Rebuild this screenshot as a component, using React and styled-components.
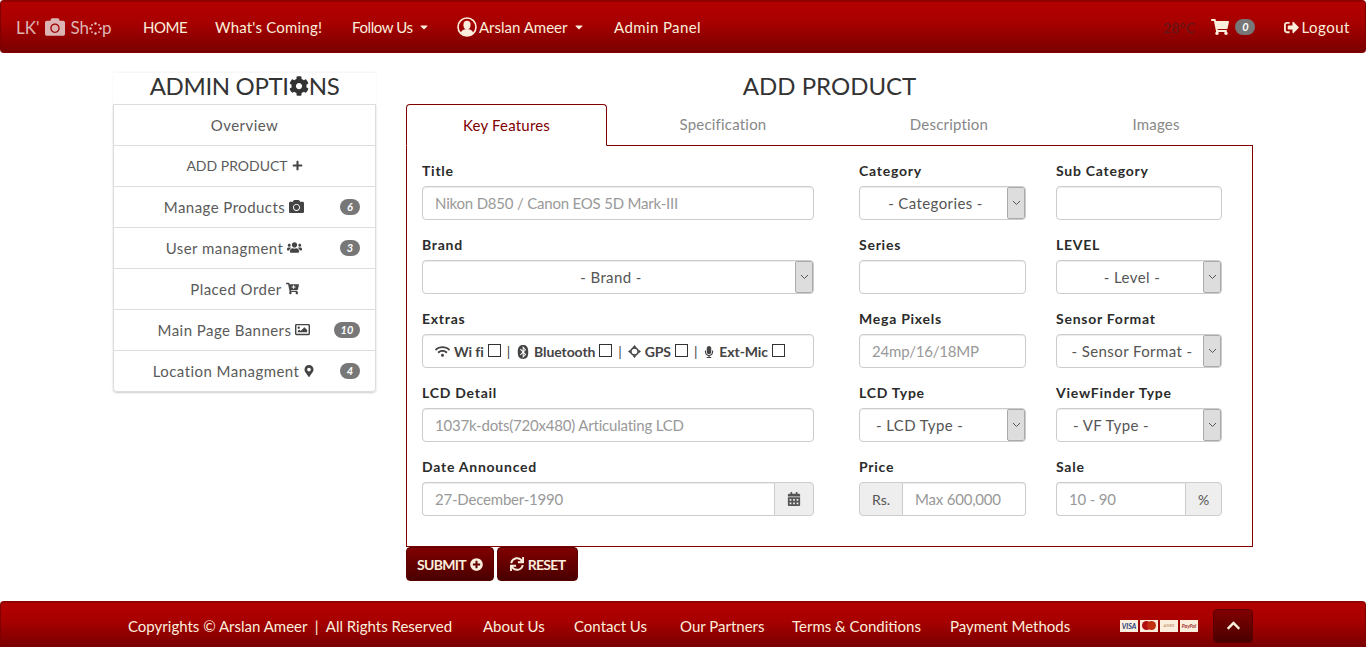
import React from 'react';
import styled, { createGlobalStyle } from 'styled-components';
import {
  FaCamera, FaPlus, FaUsers, FaCartPlus, FaRegImage, FaMapMarkerAlt, FaCog, FaShoppingCart,
  FaSignOutAlt, FaWifi, FaBluetooth, FaMicrophone, FaCalendarAlt,
  FaPlusCircle, FaSync, FaChevronUp, FaCaretDown,
} from 'react-icons/fa';

const GlobalStyle = createGlobalStyle`
  * { box-sizing: border-box; }
  html, body { margin: 0; padding: 0; background: #fff; }
  body {
    font-family: 'Lato', 'Open Sans', sans-serif;
    font-size: 14px;
    color: #333;
    overflow: hidden;
  }
`;

const Page = styled.div`
  width: 1366px;
  height: 647px;
  display: flex;
  flex-direction: column;
`;

const barBackground = `
  background: linear-gradient(180deg, #b30000 0%, #a80000 40%, #7a0000 100%);
  border: 1px solid #800000;
  border-top: 2px solid #900000;
`;

const Navbar = styled.nav`
  ${barBackground}
  height: 53px;
  border-radius: 4px;
  display: flex;
  align-items: center;
  color: #fbeedc;
  font-size: 15px;
  letter-spacing: 0.2px;
  padding-left: 15px;
`;

const Brand = styled.div`
  width: 127px;
  display: flex;
  align-items: center;
  font-size: 17px;
  color: #dcb4b4;
  letter-spacing: 0;
  svg { flex-shrink: 0; }
`;

const BrandCamera = styled.span`
  display: flex;
  margin: 0 5px 0 6px;
`;

const NavLink = styled.a`
  width: ${p => p.$width}px;
  flex-shrink: 0;
  display: flex;
  align-items: center;
  gap: 5px;
  white-space: nowrap;
  letter-spacing: ${p => p.$spacing ?? 0.2}px;
`;

const Avatar = styled.svg`
  margin-right: -3px;
`;

const Spacer = styled.div`
  flex: 1;
`;

const Weather = styled.span`
  color: #5a1a1a;
  font-size: 14px;
  margin-right: 16px;
`;

const CartLink = styled.a`
  display: flex;
  align-items: center;
  gap: 6px;
  margin-right: 29px;
`;

const Badge = styled.span`
  display: inline-block;
  min-width: ${p => (p.$wide ? 26 : 20)}px;
  height: 16px;
  line-height: 16px;
  border-radius: 10px;
  background: #777;
  color: #fff;
  font-size: 11px;
  font-weight: 700;
  font-style: italic;
  text-align: center;
  letter-spacing: 0;
`;

const Logout = styled.a`
  display: flex;
  align-items: center;
  gap: 2px;
  margin-right: 15px;
  letter-spacing: 0.5px;
`;

const Content = styled.main`
  flex: 1;
  display: flex;
  padding: 20px 113px 0;
  gap: 30px;
`;

const Sidebar = styled.aside`
  width: 263px;
  flex-shrink: 0;
`;

const SideTitle = styled.h3`
  margin: 0;
  height: 31px;
  font-size: 24px;
  font-weight: 400;
  line-height: 26px;
  color: #333;
  letter-spacing: -0.35px;
  display: flex;
  justify-content: center;
  align-items: flex-start;
  box-shadow: 0 -1px 2px rgba(0, 0, 0, 0.05);
  svg { margin-top: 3px; }
`;

const SideList = styled.ul`
  list-style: none;
  margin: 0;
  padding: 0;
  border-radius: 0 0 4px 4px;
  box-shadow: 0 1px 2px rgba(0, 0, 0, 0.2);
`;

const SideItem = styled.li`
  height: 42px;
  margin-top: -1px;
  border: 1px solid #ddd;
  display: flex;
  align-items: center;
  justify-content: center;
  gap: 4px;
  position: relative;
  color: #5a5a5a;
  font-size: ${p => (p.$caps ? 14 : 15)}px;
  letter-spacing: ${p => (p.$caps ? 0 : 0.45)}px;
  padding: 0 ${p => (p.$badge ? 21 : 0)}px 1px 0;
  &:first-child { margin-top: 0; }
  &:last-child { border-radius: 0 0 4px 4px; }
  svg { color: #444; font-size: 15px; }
`;

const SideBadge = styled.span`
  position: absolute;
  right: 15px;
  top: 12px;
  display: flex;
`;

const MainColumn = styled.section`
  width: 847px;
`;

const MainTitle = styled.h3`
  margin: 0 0 1px;
  height: 30px;
  font-size: 24px;
  font-weight: 400;
  line-height: 26px;
  text-align: center;
  color: #333;
`;

const Tabs = styled.div`
  display: grid;
  grid-template-columns: 201px 232px 220px 194px;
  height: 42px;
  position: relative;
  z-index: 1;
`;

const Tab = styled.a`
  display: flex;
  align-items: center;
  justify-content: center;
  padding-bottom: 1px;
  font-size: 15px;
  letter-spacing: 0.2px;
  color: ${p => (p.$active ? '#800000' : '#888')};
  border-bottom: 1px solid #800000;
  ${p => p.$active && `
    border: 1px solid #800000;
    border-bottom: 1px solid #fff;
    border-radius: 4px 4px 0 0;
  `}
`;

const Panel = styled.div`
  margin-top: -1px;
  height: 402px;
  border: 1px solid #800000;
  padding: 16px 15px 0;
  display: grid;
  grid-template-columns: 407px 167px 166px;
  column-gap: 30px;
  grid-auto-rows: 74px;
`;

const FieldGroup = styled.div`
  display: flex;
  flex-direction: column;
  padding-right: ${p => (p.$wide ? 15 : 0)}px;
`;

const Label = styled.label`
  font-size: 14px;
  font-weight: 700;
  color: #2b2b2b;
  height: 24px;
  line-height: 18px;
  letter-spacing: 0.75px;
`;

const fieldBox = `
  height: 34px;
  border: 1px solid #ccc;
  border-radius: 4px;
  background: #fff;
  box-shadow: inset 0 1px 1px rgba(0, 0, 0, 0.075);
`;

const TextBox = styled.div`
  ${fieldBox}
  display: flex;
  align-items: center;
  padding: 0 12px;
  font-size: 15px;
  letter-spacing: -0.2px;
  color: #999;
  flex: ${p => (p.$grow ? 1 : 'none')};
  ${p => p.$grow && `border-radius: ${p.$side === 'left' ? '4px 0 0 4px' : '0 4px 4px 0'};`}
  ${p => p.$grow && (p.$side === 'left' ? 'border-right: 0;' : 'border-left: 0;')}
`;

const SelectBox = styled.div`
  ${fieldBox}
  display: flex;
  align-items: center;
  font-size: 15px;
  letter-spacing: 0.4px;
  color: #555;
  overflow: hidden;
`;

const SelectText = styled.span`
  flex: 1;
  text-align: ${p => (p.$left ? 'left' : 'center')};
  padding-left: ${p => (p.$left ? 16 : 4)}px;
`;

const SelectArrow = styled.span`
  width: 18px;
  height: 100%;
  background: #ddd;
  border: 1px solid #aaa;
  border-radius: 2px;
  display: flex;
  align-items: center;
  justify-content: center;
  color: #555;
`;

const ExtrasBox = styled.div`
  ${fieldBox}
  display: flex;
  align-items: center;
  padding: 1px 12px 0;
  font-size: 14px;
  font-weight: 700;
  letter-spacing: -0.1px;
  color: #444;
  white-space: nowrap;
`;

const Extra = styled.span`
  display: flex;
  align-items: center;
  gap: 4px;
`;

const Check = styled.span`
  display: inline-block;
  width: 13px;
  height: 13px;
  margin-top: -3px;
  border: 1px solid #333;
  background: #fff;
`;

const Divider = styled.span`
  margin: 0 6px;
  font-weight: 400;
`;

const InputGroup = styled.div`
  display: flex;
  height: 34px;
`;

const Addon = styled.span`
  width: ${p => p.$width}px;
  flex-shrink: 0;
  height: 34px;
  background: #eee;
  border: 1px solid #ccc;
  border-radius: ${p => (p.$side === 'left' ? '4px 0 0 4px' : '0 4px 4px 0')};
  display: flex;
  align-items: center;
  justify-content: center;
  color: #555;
  font-size: 14px;
`;

const Actions = styled.div`
  display: flex;
  gap: 3px;
`;

const ActionButton = styled.button`
  height: 34px;
  width: ${p => p.$width}px;
  padding: 0;
  display: flex;
  align-items: center;
  justify-content: center;
  gap: 4px;
  font-family: inherit;
  font-size: 14px;
  font-weight: 700;
  letter-spacing: -0.7px;
  color: #fbeedc;
  background: linear-gradient(180deg, #800000 0%, #4a0000 100%);
  border: 1px solid #5a0000;
  border-radius: 4px;
`;

const Footer = styled.footer`
  ${barBackground}
  height: 46px;
  flex-shrink: 0;
  border-radius: 4px 4px 0 0;
  display: flex;
  align-items: center;
  padding: 2px 0 0 127px;
  color: #fbeedc;
  font-size: 15px;
`;

const FooterLink = styled.a`
  width: ${p => p.$width}px;
  flex-shrink: 0;
  white-space: nowrap;
`;

const PayCards = styled.div`
  display: flex;
  gap: 2px;
  margin-right: 15px;
`;

const PayCard = styled.span`
  width: 18px;
  height: 12px;
  background: #fbeedc;
  color: ${p => p.$color};
  font-size: ${p => p.$size}px;
  font-weight: 700;
  font-style: italic;
  line-height: 12px;
  text-align: center;
  overflow: hidden;
  display: flex;
  align-items: center;
  justify-content: center;
`;

const TopButton = styled.button`
  width: 40px;
  height: 34px;
  display: flex;
  align-items: center;
  justify-content: center;
  padding: 0;
  color: #fbeedc;
  background: linear-gradient(180deg, #800000 0%, #4a0000 100%);
  border: 1px solid #5a0000;
  border-radius: 4px;
  font-size: 15px;
`;

// dotted ring that stands in for the "o" of the shop logo
const SpinnerDots = () => (
  <svg width="13" height="13" viewBox="0 0 13 13" fill="#e8c8c8" style={{ marginTop: 3 }}>
    {[0, 45, 90, 135, 180, 225, 270, 315].map(angle => (
      <circle
        key={angle}
        cx={6.5 + 5 * Math.cos((angle * Math.PI) / 180)}
        cy={6.5 + 5 * Math.sin((angle * Math.PI) / 180)}
        r={angle % 90 === 0 ? 1.2 : 0.9}
      />
    ))}
  </svg>
);

const UserAvatar = () => (
  <Avatar width="20" height="20" viewBox="0 0 20 20">
    <circle cx="10" cy="10" r="9" fill="none" stroke="#fbeedc" strokeWidth="1.6" />
    <ellipse cx="10" cy="8" rx="3.6" ry="4.2" fill="#fbeedc" />
    <path d="M3.8 16c.8-3 3-4 6.2-4s5.4 1 6.2 4a8 8 0 0 1-12.4 0z" fill="#fbeedc" />
  </Avatar>
);

const ThinChevron = () => (
  <svg width="9" height="6" viewBox="0 0 9 6" fill="none" stroke="#555" strokeWidth="1">
    <path d="M1 1l3.5 3.5L8 1" />
  </svg>
);

const GpsIcon = () => (
  <svg width="13" height="13" viewBox="0 0 13 13" fill="#444">
    <circle cx="6.5" cy="6.5" r="3.6" fill="none" stroke="#444" strokeWidth="1.6" />
    <path d="M6.5 0l2 2.6h-4zM6.5 13l-2-2.6h4zM0 6.5l2.6-2v4zM13 6.5l-2.6 2v-4z" />
  </svg>
);

const MasterLogo = () => (
  <svg width="14" height="9" viewBox="0 0 14 9">
    <circle cx="4.5" cy="4.5" r="4.5" fill="#b01010" />
    <circle cx="9.5" cy="4.5" r="4.5" fill="#c03010" />
  </svg>
);

const sideItems = [
  { text: 'Overview' },
  { text: 'ADD PRODUCT', icon: <FaPlus size={11} />, caps: true },
  { text: 'Manage Products', icon: <FaCamera />, badge: '6' },
  { text: 'User managment', icon: <FaUsers />, badge: '3' },
  { text: 'Placed Order', icon: <FaCartPlus size={13} /> },
  { text: 'Main Page Banners', icon: <FaRegImage />, badge: '10', wide: true },
  { text: 'Location Managment', icon: <FaMapMarkerAlt size={12} />, badge: '4' },
];

const footerLinks = [
  { text: 'About Us', width: 91 },
  { text: 'Contact Us', width: 106 },
  { text: 'Our Partners', width: 112 },
  { text: 'Terms & Conditions', width: 158 },
  { text: 'Payment Methods', width: 170 },
];

const Field = ({ label, wide, children }) => (
  <FieldGroup $wide={wide}>
    <Label>{label}</Label>
    {children}
  </FieldGroup>
);

const Select = ({ text, left }) => (
  <SelectBox>
    <SelectText $left={left}>{text}</SelectText>
    <SelectArrow><ThinChevron /></SelectArrow>
  </SelectBox>
);

const App = () => (
  <Page>
    <GlobalStyle />
    <Navbar>
      <Brand>
        LK'<BrandCamera><FaCamera size={20} /></BrandCamera>Sh<SpinnerDots />p
      </Brand>
      <NavLink $width={72} $spacing={-0.5}>HOME</NavLink>
      <NavLink $width={137}>What's Coming!</NavLink>
      <NavLink $width={105} $spacing={-0.4}>Follow Us <FaCaretDown size={12} /></NavLink>
      <NavLink $width={157} $spacing={0}><UserAvatar /> Arslan Ameer <FaCaretDown size={12} /></NavLink>
      <NavLink $width={100} $spacing={0.4}>Admin Panel</NavLink>
      <Spacer />
      <Weather>28°C</Weather>
      <CartLink><FaShoppingCart size={18} /><Badge>0</Badge></CartLink>
      <Logout><FaSignOutAlt size={15} /> Logout</Logout>
    </Navbar>
    <Content>
      <Sidebar>
        <SideTitle>ADMIN OPTI<FaCog size={20} />NS</SideTitle>
        <SideList>
          {sideItems.map(item => (
            <SideItem key={item.text} $badge={!!item.badge} $caps={item.caps}>
              {item.text} {item.icon}
              {item.badge && <SideBadge><Badge $wide={item.wide}>{item.badge}</Badge></SideBadge>}
            </SideItem>
          ))}
        </SideList>
      </Sidebar>
      <MainColumn>
        <MainTitle>ADD PRODUCT</MainTitle>
        <Tabs>
          <Tab $active>Key Features</Tab>
          <Tab>Specification</Tab>
          <Tab>Description</Tab>
          <Tab>Images</Tab>
        </Tabs>
        <Panel>
          <Field wide label="Title"><TextBox>Nikon D850 / Canon EOS 5D Mark-III</TextBox></Field>
          <Field label="Category"><Select text="- Categories -" /></Field>
          <Field label="Sub Category"><TextBox /></Field>

          <Field wide label="Brand"><Select text="- Brand -" /></Field>
          <Field label="Series"><TextBox /></Field>
          <Field label="LEVEL"><Select text="- Level -" /></Field>

          <Field wide label="Extras">
            <ExtrasBox>
              <Extra><FaWifi size={15} /> Wi fi <Check /></Extra>
              <Divider>|</Divider>
              <Extra><FaBluetooth size={14} /> Bluetooth <Check /></Extra>
              <Divider>|</Divider>
              <Extra><GpsIcon /> GPS <Check /></Extra>
              <Divider>|</Divider>
              <Extra><FaMicrophone size={12} /> Ext-Mic <Check /></Extra>
            </ExtrasBox>
          </Field>
          <Field label="Mega Pixels"><TextBox>24mp/16/18MP</TextBox></Field>
          <Field label="Sensor Format"><Select text="- Sensor Format -" /></Field>

          <Field wide label="LCD Detail"><TextBox>1037k-dots(720x480) Articulating LCD</TextBox></Field>
          <Field label="LCD Type"><Select left text="- LCD Type -" /></Field>
          <Field label="ViewFinder Type"><Select left text="- VF Type -" /></Field>

          <Field wide label="Date Announced">
            <InputGroup>
              <TextBox $grow $side="left">27-December-1990</TextBox>
              <Addon $width={40} $side="right"><FaCalendarAlt /></Addon>
            </InputGroup>
          </Field>
          <Field label="Price">
            <InputGroup>
              <Addon $width={44} $side="left">Rs.</Addon>
              <TextBox $grow $side="right">Max 600,000</TextBox>
            </InputGroup>
          </Field>
          <Field label="Sale">
            <InputGroup>
              <TextBox $grow $side="left">10 - 90</TextBox>
              <Addon $width={37} $side="right">%</Addon>
            </InputGroup>
          </Field>
        </Panel>
        <Actions>
          <ActionButton $width={88}>SUBMIT <FaPlusCircle size={13} /></ActionButton>
          <ActionButton $width={81}><FaSync size={14} /> RESET</ActionButton>
        </Actions>
      </MainColumn>
    </Content>
    <Footer>
      <FooterLink $width={355}>Copyrights © Arslan Ameer&nbsp; |&nbsp; All Rights Reserved</FooterLink>
      {footerLinks.map(link => <FooterLink key={link.text} $width={link.width}>{link.text}</FooterLink>)}
      <PayCards>
        <PayCard $color="#1a3a7a" $size={7}>VISA</PayCard>
        <PayCard><MasterLogo /></PayCard>
        <PayCard $color="#c89a7a" $size={4}>AMEX</PayCard>
        <PayCard $color="#a03030" $size={5}>PayPal</PayCard>
      </PayCards>
      <TopButton><FaChevronUp /></TopButton>
    </Footer>
  </Page>
);

export default App;
